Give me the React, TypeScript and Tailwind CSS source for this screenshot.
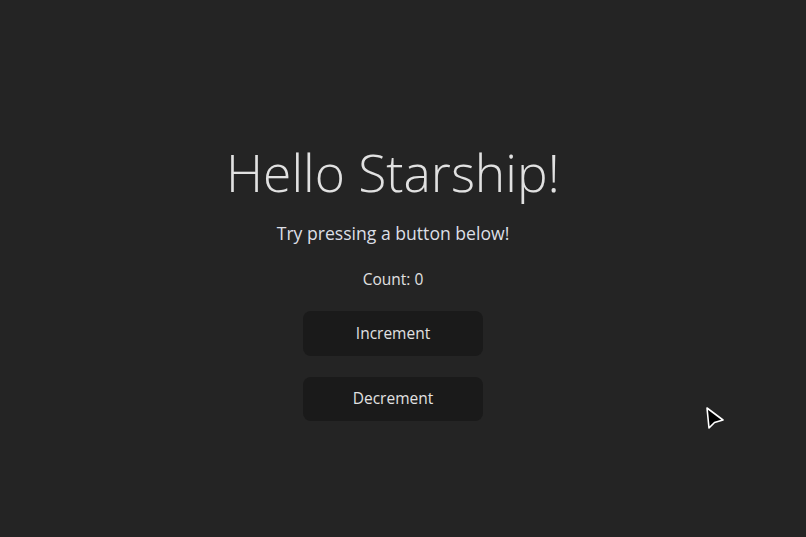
import React, { useState } from 'react';

const UI_TEXT = {
  title: 'Hello Starship!',
  hint: 'Try pressing a button below!',
  increment: 'Increment',
  decrement: 'Decrement',
} as const;

const Cursor: React.FC = () => (
  <svg
    className="absolute left-[704px] top-[405px]"
    width="22"
    height="26"
    viewBox="0 0 22 26"
    fill="none"
  >
    <path
      d="M3 3 L19 15 L10.5 17.5 L5 23 Z"
      fill="#000"
      stroke="#fff"
      strokeWidth="1.6"
      strokeLinejoin="round"
    />
  </svg>
);

export default function App() {
  const [count, setCount] = useState(0);

  return (
    <div
      className="relative flex min-h-screen flex-col items-center bg-[#242424] pr-[20px] pt-[144px] text-[#e1e1e1]"
      style={{ fontFamily: '"Open Sans", "Noto Sans", sans-serif' }}
    >
      <h1 className="text-[51.5px] font-light leading-[56px]">{UI_TEXT.title}</h1>
      <p className="mt-[21px] text-[17.6px] leading-[24px] text-[#dcdfe6]">{UI_TEXT.hint}</p>
      <p className="mt-[23px] text-[15.5px] leading-[22px]">Count: {count}</p>

      <button
        onClick={() => setCount(count + 1)}
        className="mt-[21px] h-[45px] w-[180px] rounded-lg bg-[#1a1a1a] text-[15.5px] font-medium"
      >
        {UI_TEXT.increment}
      </button>
      <button
        onClick={() => setCount(count - 1)}
        className="mt-[21px] h-[44px] w-[180px] rounded-lg bg-[#1a1a1a] text-[15.5px] font-medium"
      >
        {UI_TEXT.decrement}
      </button>

      <Cursor />
    </div>
  );
}
